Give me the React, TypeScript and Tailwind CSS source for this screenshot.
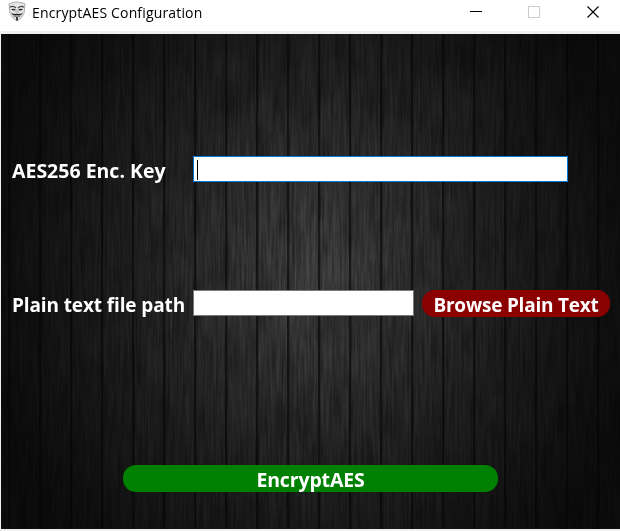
import type { ReactNode } from "react";

const seams = Array.from({ length: 20 }, (_, i) => 7 + i * 31);

function MaskIcon() {
  return (
    <svg width="18" height="21" viewBox="0 0 18 22" preserveAspectRatio="none" fill="none">
      <path d="M1 3Q9-1 17 3L16 13Q14 18 9 21Q4 18 2 13Z" fill="#e6e6e6" stroke="#aaa" strokeWidth="1" />
      <path d="M2 6.500Q5 4.500 8 7.300M10 7.300Q13 4.500 16 6.500" stroke="#444" strokeWidth="1.300" />
      <path d="M3 8.700Q5.500 7 8 9.500Q5 10.700 3 8.700ZM10 9.500Q12.500 7 15 8.700Q13 10.700 10 9.500Z" fill="#222" />
      <path d="M8 9V13L9 14L10 13V9" stroke="#999" strokeWidth=".8" />
      <path d="M3 12Q5 16.500 9 14.800Q13 16.500 15 12Q13 14 9 13.700Q5 14 3 12Z" fill="#222" />
      <path d="M5.500 15.700Q9 17.800 12.500 15.700" stroke="#666" strokeWidth=".9" />
      <path d="M9 16.800V20.500" stroke="#222" strokeWidth="1.700" />
    </svg>
  );
}

function WoodBackdrop() {
  return (
    <svg className="absolute inset-0" width="619" height="495" aria-hidden="true">
      <defs>
        <filter id="grain" x="0" y="0" width="100%" height="100%" colorInterpolationFilters="sRGB">
          <feTurbulence type="fractalNoise" baseFrequency="0.46 0.02" numOctaves="4" seed="8" />
          <feColorMatrix values="0.4 0 0 0 0.3  0.4 0 0 0 0.3  0.4 0 0 0 0.3  0 0 0 0 1" />
        </filter>
        <filter id="blotch" x="0" y="0" width="100%" height="100%" colorInterpolationFilters="sRGB">
          <feTurbulence type="fractalNoise" baseFrequency="0.07 0.022" numOctaves="4" seed="21" />
          <feColorMatrix values="0 0 0 0 0  0 0 0 0 0  0 0 0 0 0  2 0 0 0 -0.9" />
        </filter>
        <radialGradient id="glow" gradientUnits="userSpaceOnUse" cx="0" cy="0" r="1" gradientTransform="translate(312 238) scale(330 380)">
          <stop offset="0" stopColor="#787878" />
          <stop offset=".25" stopColor="#5c5c5c" />
          <stop offset=".55" stopColor="#3b3b3b" />
          <stop offset=".85" stopColor="#222222" />
          <stop offset="1" stopColor="#161616" />
        </radialGradient>
      </defs>
      <rect width="619" height="495" filter="url(#grain)" />
      <rect width="619" height="495" filter="url(#blotch)" opacity=".28" />
      <rect width="619" height="495" fill="url(#glow)" className="mix-blend-multiply" />
      {seams.map((x) => (
        <g key={x}>
          <rect x={x} width="2" height="495" fill="#050505" opacity=".62" />
          <rect x={x + 2} width="1" height="495" fill="#000" opacity=".15" />
        </g>
      ))}
    </svg>
  );
}

function Label({ children, className }: { children: ReactNode; className: string }) {
  return <span className={`block shrink-0 whitespace-nowrap ${className}`}>{children}</span>;
}

export default function App() {
  return (
    <div className="flex h-[531px] w-[620px] flex-col overflow-hidden bg-[#f0f0f0] font-['Open_Sans','Noto_Sans',sans-serif]">
      <header className="flex h-[31px] shrink-0 items-start bg-white text-black">
        <div className="ml-2 mt-[1px] w-6"><MaskIcon /></div>
        <h1 className="mt-[2px] whitespace-nowrap text-[14px] leading-[22px] tracking-[0.16px]">EncryptAES Configuration</h1>
        <svg className="ml-auto" width="150" height="31" shapeRendering="crispEdges" fill="none">
          <path d="M0 11.500H12" stroke="black" />
          <rect x="58.500" y="6.500" width="11" height="11" stroke="#ccc" />
          <path d="M117.500 6.500L128.500 17.500M128.500 6.500L117.500 17.500" stroke="black" strokeWidth="1.100" shapeRendering="auto" />
        </svg>
      </header>
      <main className="relative ml-px mt-[3px] h-[495px] w-[619px] shrink-0 overflow-hidden bg-[#151515]">
        <WoodBackdrop />
        <div className="relative flex h-full flex-col text-[19px] font-bold leading-[27px] text-white">
          <div className="mt-[122px] flex h-[27px]">
            <Label className="ml-[11px] mt-px w-[181px] text-[19.500px] leading-[27px]">AES256 Enc. Key</Label>
            <div className="flex h-[26px] w-[375px] border border-[#0078d7] bg-white pl-[3px] pt-[3px]">
              <span className="h-5 w-px bg-black" />
            </div>
          </div>
          <div className="mt-[107px] flex h-[27px]">
            <Label className="ml-[11px] mt-[2px] w-[181px] tracking-[-0.12px]">Plain text file path</Label>
            <div className="h-[26px] w-[221px] border border-[#7a7a7a] bg-white" />
            <button className="ml-2 flex h-[27px] w-[188px] justify-center rounded-[13px] bg-[#8b0000]">
              <Label className="mt-[2px] tracking-[-0.22px]">Browse Plain Text</Label>
            </button>
          </div>
          <button className="ml-[122px] mt-[148px] flex h-[27px] w-[375px] justify-center rounded-[13px] bg-[#008000]">
            <Label className="mt-px text-[19.500px] leading-[27px] tracking-[-0.15px]">EncryptAES</Label>
          </button>
        </div>
      </main>
    </div>
  );
}
